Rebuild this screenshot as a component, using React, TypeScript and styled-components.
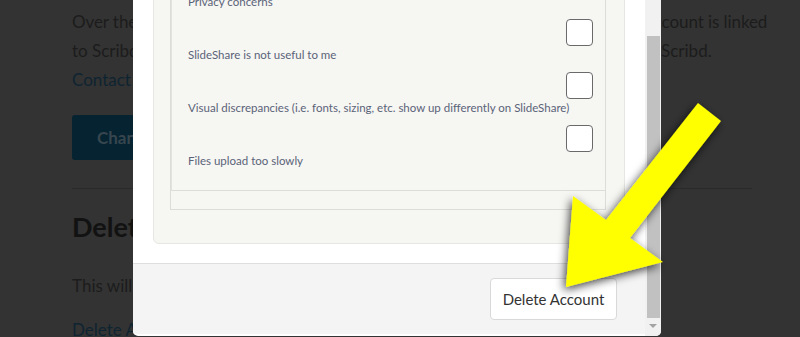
import styled, { createGlobalStyle } from "styled-components";

const GlobalStyle = createGlobalStyle`
  html, body {
    margin: 0;
    padding: 0;
    background: #333333;
    overflow: hidden;
  }
  #root {
    position: relative;
    width: 800px;
    height: 337px;
    overflow: hidden;
  }
`;

const reasons = [
  "Privacy concerns",
  "SlideShare is not useful to me",
  "Visual discrepancies (i.e. fonts, sizing, etc. show up differently on SlideShare)",
  "Files upload too slowly",
];

const Page = styled.div`
  padding: 7px 48px 0 72px;
  font-family: Lato, "Liberation Sans", sans-serif;
  color: #1c1c1c;
`;

const Para = styled.p`
  margin: 0;
  font-size: 17px;
  line-height: 29px;
`;

const Line = styled.span<{ $tight?: boolean }>`
  display: block;
  white-space: nowrap;
  letter-spacing: ${(p) => (p.$tight ? "-0.08px" : "normal")};
`;

const DimLink = styled.span`
  color: #0f2431;
`;

const PrimaryButton = styled.div`
  margin-top: 21px;
  width: 180px;
  height: 45px;
  border-radius: 3px;
  background: #062331;
  color: #37464e;
  font-weight: 700;
  font-size: 17px;
  display: flex;
  align-items: center;
  padding-left: 25px;
  box-sizing: border-box;
`;

const Divider = styled.div`
  margin-top: 28px;
  height: 1px;
  background: #2a2a2a;
`;

const Heading = styled.h2`
  margin: 21px 0 0;
  font-size: 27px;
  font-weight: 700;
  color: #121212;
`;

const Body = styled.p<{ $gap?: number }>`
  margin: ${(p) => p.$gap ?? 28}px 0 0;
  font-size: 17px;
  line-height: 29px;
`;

const Modal = styled.div`
  position: absolute;
  left: 133px;
  top: 0;
  width: 528px;
  height: 336px;
  background: #ffffff;
  border-radius: 0 0 5px 5px;
  overflow: hidden;
  display: flex;
  font-family: Lato, "Liberation Sans", sans-serif;
`;

const ScrollArea = styled.div`
  flex: 1;
  overflow: hidden;
`;

const ScrollContent = styled.div`
  margin-top: -82px;
`;

const ModalBody = styled.div`
  padding: 20px 20px 19px;
`;

const Panel = styled.div`
  background: #f6f6f3;
  border: 1px solid #e6e6e2;
  border-radius: 6px;
  padding: 17px 18px 33px 16px;
`;

const Fieldset = styled.div`
  border: 1px solid #dcdcd8;
  border-top: none;
`;

const List = styled.div`
  padding: 10px 12px 12px 16px;
  border-left: 1px solid #e2e2de;
  border-bottom: 1px solid #dcdcd8;
`;

const EmptyRow = styled.div`
  height: 18px;
`;

const Row = styled.label`
  display: flex;
  flex-direction: column;
  margin-bottom: 10px;
`;

const Box = styled.span`
  align-self: flex-end;
  width: 27px;
  height: 27px;
  box-sizing: border-box;
  background: #ffffff;
  border: 1px solid #6a6a6a;
  border-radius: 4px;
`;

const Label = styled.span`
  margin-top: 2px;
  font-size: 11.5px;
  line-height: 14px;
  color: #5a6378;
`;

const Footer = styled.div`
  border-top: 1px solid #dedede;
  background: #f4f4f4;
  padding: 14px 28px 14px 0;
  display: flex;
  justify-content: flex-end;
`;

const FooterButton = styled.button`
  height: 42px;
  width: 127px;
  background: #ffffff;
  border: 1px solid #d9d9d9;
  border-radius: 4px;
  font-family: Lato, "Liberation Sans", sans-serif;
  font-size: 15px;
  color: #333333;
  padding: 0;
`;

const Scrollbar = styled.div`
  width: 16px;
  background: #f1f1f1;
  display: flex;
  flex-direction: column;
  align-items: center;
`;

const Thumb = styled.div`
  margin-top: 36px;
  width: 13px;
  height: 282px;
  background: #c1c1c1;
`;

const ArrowDown = styled.div`
  margin-top: 6px;
  width: 0;
  height: 0;
  border-left: 4px solid transparent;
  border-right: 4px solid transparent;
  border-top: 4px solid #a3a3a3;
`;

const Pointer = styled.svg`
  position: absolute;
  left: 0;
  top: 0;
  pointer-events: none;
`;

export default function App() {
  return (
    <>
      <GlobalStyle />
      <Page>
        <Para>
          <Line $tight>Over the coming months, SlideShare will be moving to Scribd. Your SlideShare account is linked</Line>
          <Line>to Scribd, and you can log in with your SlideShare email on both SlideShare and Scribd.</Line>
          <Line>
            <DimLink>Contact us if you have any questions.</DimLink>
          </Line>
        </Para>
        <PrimaryButton>Change Email</PrimaryButton>
        <Divider />
        <Heading>Delete Account</Heading>
        <Body>This will permanently delete your SlideShare account.</Body>
        <Body $gap={15}>
          <DimLink>Delete Account</DimLink>
        </Body>
      </Page>

      <Modal>
        <ScrollArea>
          <ScrollContent>
            <ModalBody>
              <Panel>
                <Fieldset>
                  <List>
                    {reasons.map((r) => (
                      <Row key={r}>
                        <Box />
                        <Label>{r}</Label>
                      </Row>
                    ))}
                  </List>
                  <EmptyRow />
                </Fieldset>
              </Panel>
            </ModalBody>
            <Footer>
              <FooterButton>Delete Account</FooterButton>
            </Footer>
          </ScrollContent>
        </ScrollArea>
        <Scrollbar>
          <Thumb />
          <ArrowDown />
        </Scrollbar>
      </Modal>

      <Pointer width="800" height="337" viewBox="0 0 800 337">
        <defs>
          <filter id="shade" x="-30%" y="-30%" width="160%" height="160%">
            <feDropShadow dx="-2" dy="3" stdDeviation="5" floodColor="#000" floodOpacity="0.75" />
          </filter>
        </defs>
        <polygon
          points="698,103 721,121 630,238 663,262 566,287 573,196 606,220"
          fill="#ffff00"
          filter="url(#shade)"
        />
      </Pointer>
    </>
  );
}
